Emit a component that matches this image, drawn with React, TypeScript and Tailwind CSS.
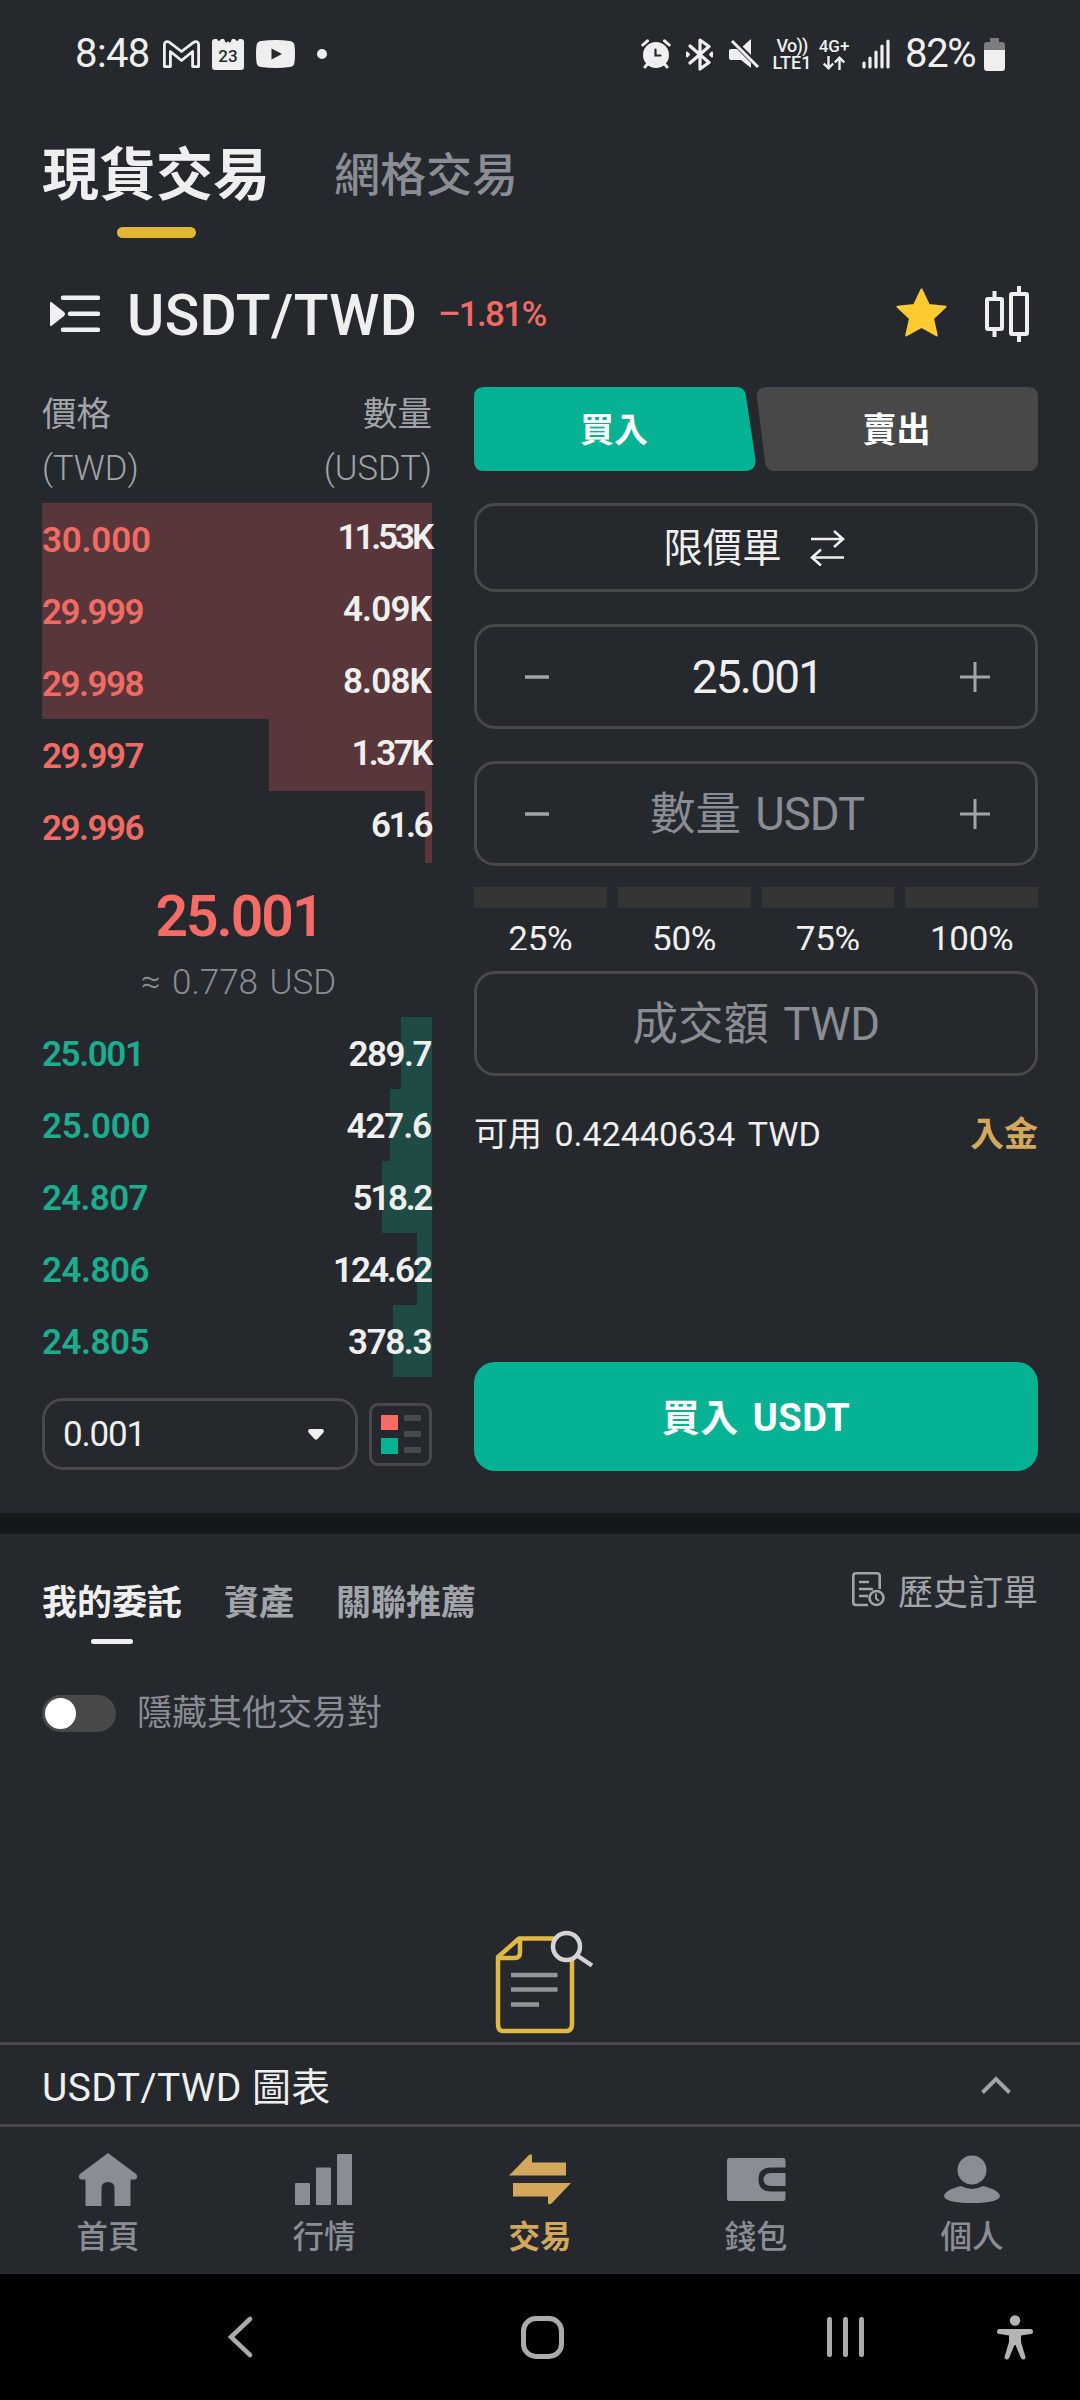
import React from 'react';
import clsx from 'clsx';

const asks = [
  { price: '30.000', amount: '11.53K', bar: 'w-[390px]', spacing: 'tracking-[-0.2px]', amountSpacing: 'tracking-[-3.1px]' },
  { price: '29.999', amount: '4.09K', bar: 'w-[390px]', spacing: 'tracking-[-1.5px]', amountSpacing: 'tracking-[-0.8px]' },
  { price: '29.998', amount: '8.08K', bar: 'w-[390px]', spacing: 'tracking-[-1.5px]', amountSpacing: 'tracking-[-0.8px]' },
  { price: '29.997', amount: '1.37K', bar: 'w-[163px]', spacing: 'tracking-[-1.5px]', amountSpacing: 'tracking-[-2.5px]' },
  { price: '29.996', amount: '61.6', bar: 'w-[7px]', spacing: 'tracking-[-1.5px]', amountSpacing: 'tracking-[-2.5px]' },
];

const bids = [
  { price: '25.001', amount: '289.7', bar: 'w-[31px]', spacing: 'tracking-[-1.4px]', amountSpacing: 'tracking-[-1.5px]' },
  { price: '25.000', amount: '427.6', bar: 'w-[42px]', spacing: 'tracking-[-0.3px]', amountSpacing: 'tracking-[-1.1px]' },
  { price: '24.807', amount: '518.2', bar: 'w-[50px]', spacing: 'tracking-[-0.7px]', amountSpacing: 'tracking-[-2.3px]' },
  { price: '24.806', amount: '124.62', bar: 'w-[15px]', spacing: 'tracking-[-0.5px]', amountSpacing: 'tracking-[-2px]' },
  { price: '24.805', amount: '378.3', bar: 'w-[39px]', spacing: 'tracking-[-0.5px]', amountSpacing: 'tracking-[-1.4px]' },
];

const percents = ['25%', '50%', '75%', '100%'];

const StatusBar = () => (
  <div className="h-[108px] flex items-center pl-[75px] pr-[75px] text-[#efefef]">
    <span className="w-[88px] text-[40px] leading-none tracking-[-0.6px]">8:48</span>
    <svg className="w-[37px] h-[28px]" viewBox="0 0 37 28" fill="none" stroke="currentColor" strokeWidth="2.8" strokeLinejoin="round">
      <path d="M1.4 26.6V4.500C1.4 1.600 4.300 .8 6.500 2.400L18.500 11.500L30.500 2.400C32.700 .8 35.600 1.600 35.600 4.500V26.600H29.600V11.500L18.500 20.500L7.400 11.500V26.600Z" />
    </svg>
    <div className="ml-3 w-8 h-[31px] relative">
      <svg className="w-8 h-[31px]" viewBox="0 0 32 31" fill="currentColor">
        <path d="M3 0H5Q6.500 4 9 0H12Q14 6 16 2Q18 6 20 0H23Q25.500 4 27 0H29Q32 0 32 3V28Q32 31 29 31H3Q0 31 0 28V3Q0 0 3 0Z" />
      </svg>
      <span className="absolute inset-x-0 top-[8px] text-center text-[17px] leading-[19px] font-medium text-[#25282d]">23</span>
    </div>
    <svg className="ml-3 w-[39px] h-[28px]" viewBox="0 0 39 28">
      <path d="M5 1Q19.500-1 34 1Q38 1.500 38.500 5.500Q39.500 14 38.500 22.500Q38 26.500 34 27Q19.500 29 5 27Q1 26.500 .5 22.500Q-.5 14 .5 5.500Q1 1.500 5 1Z" fill="currentColor" />
      <path d="M15.500 8.500L26 14L15.500 19.500Z" fill="#25282d" />
    </svg>
    <div className="ml-[22px] size-[10px] rounded-full bg-[#efefef]" />

    <svg className="ml-auto w-[30px] h-[30px]" viewBox="0 0 30 30" fill="none" stroke="currentColor" strokeLinecap="round">
      <circle cx="15" cy="16" r="13" fill="currentColor" stroke="none" />
      <path d="M1.800 6L6.500 1.800M28.200 6L23.500 1.800M6.500 25L4 28M23.500 25L26 28" strokeWidth="3" />
      <path d="M14.500 10.500V16.500H19.500" stroke="#25282d" strokeWidth="2.200" />
    </svg>
    <svg className="ml-[14px] w-[29px] h-[33px]" viewBox="0 0 29 33" fill="none" stroke="currentColor" strokeWidth="3.200" strokeLinecap="round" strokeLinejoin="round">
      <path d="M5 8L24 24.500L15 31V2L24 8.500L5 25" />
      <path d="M2 14.500V18.500L4 16.500ZM27 14.500V18.500L25 16.500Z" strokeWidth="2" />
    </svg>
    <svg className="ml-[15px] w-[31px] h-[30px]" viewBox="0 0 31 30" fill="currentColor">
      <path d="M22 0V17L13 8ZM2 10H8L22 24V29L12 21H2Q0 21 0 19V12Q0 10 2 10Z" />
      <path d="M3 2L29 28" stroke="currentColor" strokeWidth="3" />
      <path d="M7 2L30 25" stroke="#25282d" strokeWidth="1.500" />
    </svg>
    <div className="ml-3 w-10 flex flex-col items-center font-medium">
      <span className="text-[18px] leading-[17px] tracking-[-0.8px]">Vo))</span>
      <span className="text-[18px] leading-[17px]">LTE1</span>
    </div>
    <div className="ml-[6px] w-8 flex flex-col items-center font-medium">
      <span className="text-[17px] leading-[17px]">4G+</span>
      <svg className="mt-px w-[22px] h-[14px]" viewBox="0 0 22 14" fill="none" stroke="currentColor" strokeWidth="2.400">
        <path d="M5.500 0V12M.8 7.500L5.500 12.300L10.200 7.500M16.500 14V2M11.800 6.500L16.500 1.700L21.200 6.500" />
      </svg>
    </div>
    <svg className="ml-3 w-[28px] h-[30px]" viewBox="0 0 28 30" stroke="currentColor" strokeWidth="3.200" strokeLinecap="round">
      <path d="M2 24V28M8 19V28M14 13V28M20 7V28M26 2V28" />
    </svg>
    <span className="ml-[15px] w-[79px] text-[40px] leading-none tracking-[-1.300px]">82%</span>
    <svg className="w-[21px] h-[33px]" viewBox="0 0 21 33">
      <path d="M6 0H15V4H18Q21 4 21 7V12H0V7Q0 4 3 4H6Z" fill="#7b7d80" />
      <path d="M0 12H21V30Q21 33 18 33H3Q0 33 0 30Z" fill="currentColor" />
    </svg>
  </div>
);

const Header = () => (
  <>
    <div className="h-[130px] flex pl-[42px]">
      <div className="w-[228px] flex flex-col items-center">
        <span className="h-[119px] pt-[32px] text-[57px] leading-[72px] font-bold text-[#efefef]">現貨交易</span>
        <div className="w-[79px] h-[11px] rounded-full bg-[#e2b735]" />
      </div>
      <span className="ml-[64px] pt-[29px] text-[46px] leading-[76px] font-medium text-[#8a8d94]">網格交易</span>
    </div>
    <div className="h-[149px] flex items-center pl-[50px] pr-[51px]">
      <svg className="mt-[2px] w-[50px] h-[38px]" viewBox="0 0 50 38" fill="#efefef">
        <path d="M0 8Q0 6 2 7.500L14 17Q16 19 14 21L2 30.500Q0 32 0 30Z" />
        <path d="M13 2.800H48M20 18.800H48M13 34.800H48" stroke="#efefef" strokeWidth="4.500" strokeLinecap="round" />
      </svg>
      <span className="ml-[27px] pt-[6px] w-[311px] whitespace-nowrap text-[57px] leading-[70px] font-medium text-[#efefef] tracking-[0.400px]">USDT/TWD</span>
      <span className="pt-[5px] text-[35px] leading-[50px] font-medium text-[#f06b64] tracking-[-1.700px]">–1.81%</span>
      <svg className="ml-auto w-[51px] h-[50px]" viewBox="0 0 51 50" fill="#ffcb31" stroke="#ffcb31" strokeWidth="2" strokeLinejoin="round">
        <path d="M25.500 1.500L32.800 17L49.500 18.800L37 30.500L40.800 47.500L25.500 39L10.200 47.500L14 30.500L1.500 18.800L18.200 17Z" />
      </svg>
      <svg className="mt-[3px] ml-[38px] w-[44px] h-[56px]" viewBox="0 0 44 56" fill="none" stroke="#efefef" strokeWidth="4">
        <rect x="2" y="13" width="15" height="30" rx="1" />
        <rect x="26" y="8" width="16" height="40" rx="1" />
        <path d="M9.500 5V13M9.500 43V51M34 0V8M34 48V56" />
      </svg>
    </div>
  </>
);

interface RowProps {
  price: string;
  amount: string;
  bar: string;
  spacing: string;
  amountSpacing: string;
  ask?: boolean;
}

const OrderRow = ({ price, amount, bar, spacing, amountSpacing, ask }: RowProps) => (
  <div className="relative h-[72px] flex items-center justify-between text-[35px] leading-none font-semibold">
    <div className={clsx('absolute right-0 inset-y-0', bar, ask ? 'bg-[#593639]' : 'bg-[#1e4b45]')} />
    <span className={clsx('relative pt-[3px]', spacing, ask ? 'text-[#f06b64]' : 'text-[#1bad90]')}>{price}</span>
    <span className={clsx('relative mr-px text-[#efefef]', amountSpacing, ask ? 'pb-[4px]' : 'pt-[3px]')}>{amount}</span>
  </div>
);

const OrderBook = () => (
  <div className="w-[390px] flex flex-col">
    <div className="h-[116px] flex justify-between text-[34.500px] leading-[54px] text-[#a1a4a9]">
      <div>
        價格
        <br />
        <span className="font-light">(TWD)</span>
      </div>
      <div className="text-right">
        數量
        <br />
        <span className="font-light">(USDT)</span>
      </div>
    </div>
    {asks.map((row) => (
      <OrderRow key={row.price} {...row} ask />
    ))}
    <div className="h-[154px] flex flex-col items-center">
      <span className="pt-[23px] pl-[4px] text-[57px] leading-[62px] font-semibold text-[#f56b65] tracking-[-2px]">25.001</span>
      <span className="pt-[10px] pl-[3px] text-[35px] leading-[50px] font-light text-[#8a8d94] [word-spacing:3px]">≈ 0.778 USD</span>
    </div>
    {bids.map((row) => (
      <OrderRow key={row.price} {...row} />
    ))}
    <div className="mt-[21px] flex items-center justify-between">
      <button className="w-[316px] h-[72px] pl-[18px] pr-[31px] flex items-center justify-between rounded-[21px] border-[3px] border-[#48494b] text-[35px] text-[#efefef]">
        <span className="pt-[2px] tracking-[-1.200px]">0.001</span>
        <svg className="w-[16px] h-[11px]" viewBox="0 0 16 11" fill="#efefef">
          <path d="M1.500 0H14.500Q17 1.500 15 4L9.500 10Q8 11.500 6.500 10L1 4Q-1 1.500 1.500 0Z" />
        </svg>
      </button>
      <button className="w-[63px] h-[63px] flex gap-[6px] px-[9px] py-[9px] rounded-[9px] border-[3px] border-[#48494b]">
        <div className="flex flex-col gap-[8px]">
          <div className="w-[17px] h-[16px] bg-[#f56b65]" />
          <div className="w-[17px] h-[16px] bg-[#05b294]" />
        </div>
        <div className="flex flex-col gap-[10px]">
          <div className="w-[17px] h-[6px] bg-[#48494b]" />
          <div className="w-[17px] h-[6px] bg-[#48494b]" />
          <div className="w-[17px] h-[6px] bg-[#48494b]" />
        </div>
      </button>
    </div>
  </div>
);

const Stepper = ({ children }: { children: React.ReactNode }) => (
  <div className="h-[105px] pl-[47px] pr-[45px] flex items-center justify-between rounded-[21px] border-[3px] border-[#48494b]">
    <svg className="w-[30px] h-[30px]" viewBox="0 0 30 30" stroke="#a1a4a9" strokeWidth="3.500">
      <path d="M1 15H25" />
    </svg>
    {children}
    <svg className="w-[30px] h-[30px]" viewBox="0 0 30 30" stroke="#a1a4a9" strokeWidth="3">
      <path d="M0 15H30M15 0V30" />
    </svg>
  </div>
);

const TradeForm = () => (
  <div className="w-[564px] flex flex-col">
    <div className="flex gap-px text-[34px] font-bold text-white">
      <button className="w-[282px] h-[84px] pt-[3px] pr-[2px] bg-[#05b294] [clip-path:path('M10_0H262Q271_0_272_9L281.500_73Q282_84_272_84H10Q0_84_0_74V10Q0_0_10_0Z')]">買入</button>
      <button className="w-[281px] h-[84px] pt-[3px] pr-[2px] bg-[#484849] [clip-path:path('M10_0H271Q281_0_281_10V74Q281_84_271_84H18Q9_84_8_75L0_11Q-1_0_10_0Z')]">賣出</button>
    </div>
    <button className="mt-[32px] h-[89px] pr-[4px] flex items-center justify-center gap-[28px] rounded-[21px] border-[3px] border-[#48494b] text-[39.500px] text-[#efefef]">
      <span className="pt-[3px]">限價單</span>
      <svg className="w-[35px] h-[36px]" viewBox="0 0 35 36" fill="none" stroke="#efefef" strokeWidth="2.600">
        <path d="M1 9H33M24 1L33 9L24 17M34 27.500H2M11 19.500L2 27.500L11 35.500" />
      </svg>
    </button>
    <div className="mt-[32px]">
      <Stepper>
        <span className="pt-[2px] text-[46px] text-[#efefef] tracking-[-1.800px]">25.001</span>
      </Stepper>
    </div>
    <div className="mt-[32px]">
      <Stepper>
        <span className="pt-[4px] text-[45.500px] text-[#8a8d94] [word-spacing:3px]">
          數量 <span className="tracking-[-1px]">USDT</span>
        </span>
      </Stepper>
    </div>
    <div className="mt-[21px] grid grid-cols-4 gap-[11px]">
      {percents.map((percent) => (
        <div key={percent} className="h-[63px] overflow-hidden">
          <div className="h-[21px] bg-[#353536]" />
          <div className="pt-[9px] text-center text-[35px] leading-[46px] text-[#efefef] tracking-[-0.300px]">{percent}</div>
        </div>
      ))}
    </div>
    <div className="mt-[21px] h-[105px] pt-[4px] flex items-center justify-center rounded-[21px] border-[3px] border-[#48494b] text-[45.500px] text-[#8a8d94]">
      <span className="[word-spacing:3px]">
        成交額 <span className="tracking-[-0.500px]">TWD</span>
      </span>
    </div>
    <div className="mt-[33px] flex items-center justify-between text-[34px] leading-[50px] text-[#efefef]">
      <span className="[word-spacing:4px]">可用 0.42440634 TWD</span>
      <span className="font-bold text-[#d3a85c]">入金</span>
    </div>
    <button className="mt-auto h-[109px] pt-[3px] rounded-[21px] bg-[#05b294] text-[38px] font-bold text-white tracking-[0.500px] [word-spacing:4px]">買入 USDT</button>
  </div>
);

const Orders = () => (
  <div className="h-[508px] flex flex-col">
    <div className="h-[110px] flex justify-between px-[42px] text-[35px] leading-[50px]">
      <div className="flex gap-[42px] pt-[45px] font-bold text-[#a1a4a9]">
        <div className="flex flex-col items-center">
          <span className="text-[#efefef]">我的委託</span>
          <div className="mt-[10px] w-[42px] h-[5px] shrink-0 rounded-full bg-[#efefef]" />
        </div>
        <span>資產</span>
        <span>關聯推薦</span>
      </div>
      <div className="flex items-start gap-[13px] pt-[35px] text-[#a1a4a9]">
        <svg className="mt-[3px] w-[33px] h-[35px]" viewBox="0 0 33 35" fill="none" stroke="#a1a4a9" strokeWidth="2.600">
          <path d="M16 33H4Q1.300 33 1.300 30V4Q1.300 1.300 4 1.300H25Q27.700 1.300 27.700 4V17" />
          <path d="M7 10H17M7 17H21M7 24H16" />
          <circle cx="24.500" cy="26" r="7" />
          <path d="M24 21.500V26.500L27 29" strokeWidth="2" />
        </svg>
        <span>歷史訂單</span>
      </div>
    </div>
    <div className="mt-[43px] pl-[42px] flex items-center gap-[21px]">
      <div className="w-[74px] h-[37px] p-[3px] rounded-full bg-[#48494b]">
        <div className="size-[31px] rounded-full bg-white" />
      </div>
      <span className="pt-[2px] text-[35px] leading-[50px] text-[#8a8d94]">隱藏其他交易對</span>
    </div>
    <svg className="mt-auto mb-[7px] ml-[495px] w-[99px] h-[104px] overflow-visible" viewBox="0 0 99 104" fill="none" strokeWidth="4.500">
      <path d="M59 7.500H24L3 26V93Q3 100 8 100H71Q77 100 77 93V28M25 8V21Q25 27 20 27H3" stroke="#e0b943" strokeLinejoin="round" />
      <path d="M16 44H62.500M16 58.500H62.500M16 73.500H44" stroke="#92959a" />
      <circle cx="71.500" cy="15.500" r="13.500" stroke="#d4d4d6" />
      <path d="M82 24.500L97 34.500" stroke="#d4d4d6" />
    </svg>
  </div>
);

const navItems = [
  {
    label: '首頁',
    icon: <path d="M30 0L58 21Q61 24.500 57 26.500H52.500V53H36.500V35Q36.500 29 30 29Q23.500 29 23.500 35V53H7.500V26.500H3Q-1 24.500 2 21Z" />,
  },
  {
    label: '行情',
    icon: <path d="M2 30H15Q16 30 16 31V51Q16 52 15 52H2Q1 52 1 51V31Q1 30 2 30ZM23 14.500H36Q37 14.500 37 15.500V51Q37 52 36 52H23Q22 52 22 51V15.500Q22 14.500 23 14.500ZM44 1H57Q58 1 58 2V51Q58 52 57 52H44Q43 52 43 51V2Q43 1 44 1Z" />,
  },
  {
    label: '交易',
    icon: <path d="M-1 22.500L19 2Q22 0 22 3V9.500H56V22.500ZM3 30H61L42 50Q38 53 38 49.500V43.500H3Z" />,
    active: true,
  },
  {
    label: '錢包',
    icon: <path d="M3 5H57Q59.500 5 59.500 8V14.500H44Q32.500 15 32.500 26.500Q32.500 38 44 38.500H59.500V45Q59.500 48 57 48H3Q1 48 1 45V8Q1 5 3 5ZM59.500 20H45Q37.500 20.500 37.500 26.500Q37.500 32.500 45 33H59.500Z" />,
  },
  {
    label: '個人',
    icon: (
      <>
        <circle cx="30" cy="17" r="14.500" />
        <path d="M19 33Q30 39 41 33Q57 37 58 43Q57 50 30 50Q3 50 2 43Q3 37 19 33Z" />
      </>
    ),
  },
];

const BottomBar = () => (
  <>
    <div className="h-[85px] pl-[42px] pr-[69px] flex items-center justify-between border-y-[3px] border-[#48494d] text-[39px] text-[#efefef]">
      <span className="pt-[8px] tracking-[0.400px]">USDT/TWD 圖表</span>
      <svg className="w-[30px] h-[18px]" viewBox="0 0 30 18" fill="none" stroke="#a1a4a9" strokeWidth="4">
        <path d="M1.500 16.500L15 3L28.500 16.500" />
      </svg>
    </div>
    <nav className="h-[147px] grid grid-cols-5">
      {navItems.map((item) => (
        <div key={item.label} className={clsx('flex flex-col items-center pt-[26px]', item.active ? 'text-[#d3a85c]' : 'text-[#8a8d94]')}>
          <svg className="w-[60px] h-[53px] shrink-0 overflow-visible" viewBox="0 0 60 53" fill="currentColor">
            {item.icon}
          </svg>
          <span className={clsx('mt-[10px] text-[31.500px] leading-[44px]', item.active ? 'font-bold' : 'font-medium')}>{item.label}</span>
        </div>
      ))}
    </nav>
    <div className="h-[126px] flex items-center bg-black text-[#ababab]">
      <svg className="ml-[227px] w-[26px] h-[42px]" viewBox="0 0 26 42" fill="none" stroke="currentColor" strokeWidth="4.500" strokeLinecap="round">
        <path d="M23 3L4 21L23 39" />
      </svg>
      <div className="ml-[268px] w-[43px] h-[43px] rounded-[15px] border-[5px] border-[#ababab]" />
      <div className="ml-[263px] flex gap-[11px]">
        <div className="w-[5px] h-[40px] rounded-full bg-[#ababab]" />
        <div className="w-[5px] h-[40px] rounded-full bg-[#ababab]" />
        <div className="w-[5px] h-[40px] rounded-full bg-[#ababab]" />
      </div>
      <svg className="ml-[133px] w-[36px] h-[45px]" viewBox="0 0 36 45" fill="#b4b4b4">
        <circle cx="18" cy="5.500" r="5.200" />
        <path d="M2.500 14H33.500Q36 14 36 16.500Q36 19 33.500 19L24 20.500V27L28.500 42Q28.500 44.500 26 44.500Q24.500 44.500 23.500 42L18.500 30H17.500L12.500 42Q11.500 44.500 10 44.500Q7.500 44.500 7.500 42L12 27V20.500L2.500 19Q0 19 0 16.500Q0 14 2.500 14Z" />
      </svg>
    </div>
  </>
);

const App = () => {
  return (
    <div className="w-[1080px] h-[2400px] flex flex-col overflow-hidden bg-[#25282d] font-['Roboto','Noto_Sans_CJK_TC',sans-serif]">
      <StatusBar />
      <Header />
      <div className="h-[1126px] px-[42px] pb-[42px] flex justify-between">
        <OrderBook />
        <TradeForm />
      </div>
      <div className="h-[21px] bg-[#14181b]" />
      <Orders />
      <BottomBar />
    </div>
  );
};

export default App;
